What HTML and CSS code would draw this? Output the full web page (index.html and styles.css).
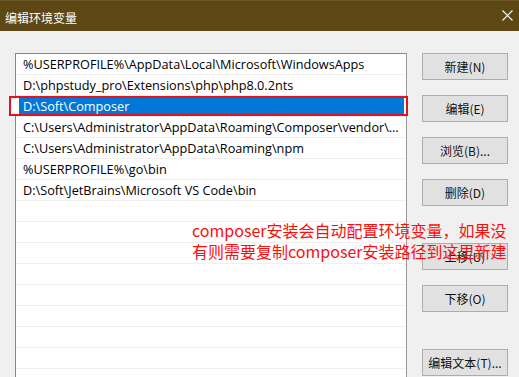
FILE: index.html
```html
<!DOCTYPE html>
<html>
  <head>
    <meta charset="utf-8" />
    <meta name="viewport" content="width=device-width, initial-scale=1.0" />
    <link rel="stylesheet" href="styles.css">
  </head>

  <body>
    <div class="window">
      <div class="titlebar">
        <span class="title">编辑环境变量</span>
        <svg class="close" width="11" height="11" viewBox="0 0 11 11">
          <path d="M0.5 0.5 L10.5 10.5 M10.5 0.5 L0.5 10.5" stroke="#fff" stroke-width="1.1" fill="none" />
        </svg>
      </div>

      <div class="content">
        <div class="list">
          <div class="row"><span>%USERPROFILE%\AppData\Local\Microsoft\WindowsApps</span></div>
          <div class="row"><span>D:\phpstudy_pro\Extensions\php\php8.0.2nts</span></div>
          <div class="row selected"><span>D:\Soft\Composer</span></div>
          <div class="row"><span>C:\Users\Administrator\AppData\Roaming\Composer\vendor\bin</span></div>
          <div class="row"><span>C:\Users\Administrator\AppData\Roaming\npm</span></div>
          <div class="row"><span>%USERPROFILE%\go\bin</span></div>
          <div class="row"><span>D:\Soft\JetBrains\Microsoft VS Code\bin</span></div>
          <div class="row"></div>
          <div class="row"></div>
          <div class="row"></div>
          <div class="row"></div>
          <div class="row"></div>
          <div class="row"></div>
          <div class="row"></div>
          <div class="row"></div>
          <div class="row"></div>
        </div>

        <div class="buttons">
          <button type="button">新建(N)</button>
          <button type="button">编辑(E)</button>
          <button type="button">浏览(B)...</button>
          <button type="button">删除(D)</button>
          <button type="button" class="group">上移(U)</button>
          <button type="button">下移(O)</button>
          <button type="button" class="group">编辑文本(T)...</button>
        </div>
      </div>

      <!-- 标注 -->
      <div class="mark"></div>
      <div class="note">
        composer安装会自动配置环境变量，如果没<br />
        有则需要复制composer安装路径到这里新建
      </div>
    </div>
  </body>
</html>
```

FILE: styles.css
```css
body {
  margin: 0;
  overflow: hidden;
  background: #f0f0f0;
  font-family: 'Open Sans', 'Noto Sans CJK SC', sans-serif;
}

.window {
  position: relative;
  width: 519px;
  height: 377px;
  overflow: hidden;
}

.titlebar {
  height: 30px;
  border-top: 1px solid #6a5726;
  background: #5c4715;
  display: flex;
  align-items: center;
  justify-content: space-between;
  padding: 0 6px 0 5px;
}

.title {
  color: #fff;
  font-family: 'Noto Sans CJK SC', sans-serif;
  font-size: 12px;
  margin-top: 2px;
}

.close {
  margin-top: -1px;
}

.content {
  display: flex;
  gap: 15px;
  padding: 22px 0 0 15px;
}

.list {
  width: 390px;
  height: 340px;
  background: #fff;
  border: 1px solid #828790;
  border-right-color: #9a9a9a;
}

.row {
  height: 20px;
  border-bottom: 1px solid #f0f0f0;
  display: flex;
}

.row span {
  flex: 1;
  margin: 0 2px 0 3px;
  padding-left: 4px;
  font-size: 12.7px;
  line-height: 21px;
  color: #000;
  white-space: nowrap;
  overflow: hidden;
  text-overflow: ellipsis;
}

.row.selected span {
  background: #0078d7;
  color: #fff;
}

.buttons {
  display: flex;
  flex-direction: column;
  gap: 15px;
}

button {
  width: 86px;
  height: 27px;
  padding: 0;
  background: #e1e1e1;
  border: 1px solid #adadad;
  font-family: 'Noto Sans CJK SC', sans-serif;
  font-size: 12px;
  color: #111;
}

button.group {
  margin-top: 22px;
}

.mark {
  position: absolute;
  left: 9px;
  top: 96px;
  width: 395px;
  height: 16px;
  border: 2px solid #e8101c;
  background: linear-gradient(to right, #fff 8px, transparent 8px);
}

.note {
  position: absolute;
  left: 192px;
  top: 220px;
  font-family: 'Noto Sans CJK SC', sans-serif;
  font-size: 16px;
  line-height: 21px;
  color: #ff0d0d;
  white-space: nowrap;
}
```
